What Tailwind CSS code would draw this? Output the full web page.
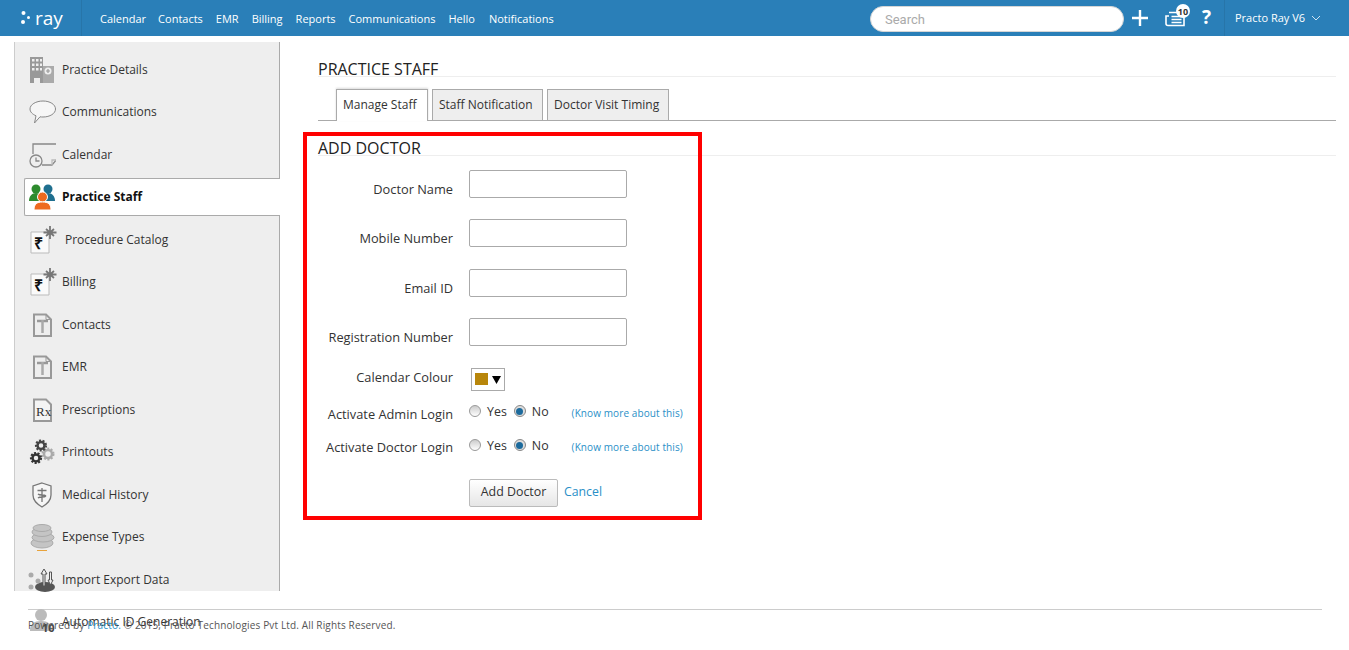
<!DOCTYPE html>
<html><head><meta charset="utf-8"><title>Practo Ray</title>
<script src="https://cdn.jsdelivr.net/npm/@tailwindcss/browser@4"></script></head>
<body class="relative h-[650px] overflow-hidden bg-white font-['Open_Sans',sans-serif] text-[12px] text-[#333]">
<header class="flex h-9 items-center bg-[#2a7fb8] text-white">
  <div class="flex h-9 w-[82px] shrink-0 items-center gap-[3px] border-r border-[#2775a9] pl-[20px]">
    <svg class="h-4 w-[12px]" viewBox="0 0 12 16" fill="#fff"><circle cx="3.500" cy="3" r="2"/><circle cx="8.500" cy="7.500" r="1.500"/><circle cx="3" cy="12" r="2"/></svg>
    <span class="text-[19px] leading-none">ray</span>
  </div>
  <nav class="ml-[18px] flex gap-[13px] pt-[2px] text-[11px]"><span>Calendar</span><span class="-ml-px">Contacts</span><span>EMR</span><span>Billing</span><span>Reports</span><span>Communications</span><span>Hello</span><span class="ml-px">Notifications</span></nav>
  <div class="ml-auto flex h-9 items-center">
    <div class="mt-[2px] flex h-[26px] w-[254px] items-center rounded-full border border-[#d5d5d5] bg-white pt-[1px] pl-[14px] font-['Roboto',sans-serif] text-[13px] text-[#aaa]">Search</div>
    <svg class="ml-[8px] h-4 w-4" viewBox="0 0 16 16" stroke="#fff" stroke-width="2.400" fill="none"><path d="M8 0v16M0 8h16"/></svg>
    <div class="relative ml-[17px] h-5 w-[22px]">
      <svg class="absolute top-[3px] left-0 h-[16px] w-[20px]" viewBox="0 0 20 16" fill="none" stroke="#fff" stroke-width="1.600"><path d="M4 1.500h15v13H3a2 2 0 0 1-2-2V5h3"/><path d="M6.500 5.500h10M6.500 8.500h10M6.500 11.500h10"/></svg>
      <span class="absolute -top-[4px] left-[11px] flex h-[14px] w-[14px] items-center justify-center rounded-full bg-white text-[9px] leading-none font-bold text-[#333]">10</span>
    </div>
    <span class="ml-[15px] -mt-[2px] w-[14px] text-[19px] leading-none font-bold">?</span>
    <div class="ml-[8px] flex h-9 w-[125px] items-center border-l border-[#2775a9] pl-[10px] text-[11px]">Practo Ray V6
      <svg class="ml-[6px] h-[6px] w-[10px]" viewBox="0 0 10 6" fill="none" stroke="#cfe3f1" stroke-width="1"><path d="M1 1l4 4 4-4"/></svg>
    </div>
  </div>
</header>

<div class="flex h-[573px]">
  <aside class="mt-[6px] ml-[14px] h-[549px] w-[266px] shrink-0 border-r border-l border-[#aaa] border-l-[#ccc] bg-[#eee] pt-[6.3px]">
    <div class="flex h-[42.5px] items-center pl-[13px]"><svg class="mr-[6px] h-[28px] w-[28px]" viewBox="0 0 28 28"><path fill="#999" d="M2 1h13v26H2z"/><path fill="#aaa" d="M15 10h11v17H15z"/><path fill="#eee" d="M4 3h2.500v2.500H4zM8 3h2.500v2.500H8zM12 3h2v2.500h-2zM4 7.500h2.500v2.500H4zM8 7.500h2.500v2.500H8zM12 7.500h2v2.500h-2zM4 12h2.500v2.500H4zM8 12h2.500v2.500H8zM12 12h2v2.500h-2zM6 22h6v5H6z"/><circle cx="20" cy="15" r="3.500" fill="#eee"/><path stroke="#999" stroke-width="1.200" d="M18 15h4M20 13v4"/></svg>Practice Details</div>
    <div class="flex h-[42.5px] items-center pl-[13px]"><svg class="mr-[6px] h-[28px] w-[28px]" viewBox="0 0 28 28" fill="#f6f6f6" stroke="#888"><path d="M15 3c7 0 12.500 3.500 12.500 8S22 19 15 19c-1 0-2 0-3-.2L6.500 25l1.500-7.200C4.500 16.200 2 14 2 11c0-4.500 6-8 13-8z"/></svg>Communications</div>
    <div class="flex h-[42.5px] items-center pl-[13px]"><svg class="mr-[6px] h-[28px] w-[28px]" viewBox="0 0 28 28" fill="none" stroke="#888" stroke-width="1.300"><path d="M5 13V3h24v15l-5 6H14"/><path d="M24 24v-5h5" stroke="#bbb"/><circle cx="8" cy="20" r="6" fill="#eee"/><path d="M8 16.500V20h3.500"/></svg>Calendar</div>
    <div class="h-[42.5px] pt-[2px] pl-[9px]"><div class="-mr-px flex h-[38px] items-center rounded-l-[2px] border border-r-0 border-[#aaa] bg-white pl-[3px] font-bold text-[#111]"><svg class="mr-[6px] h-[28px] w-[28px]" viewBox="0 0 28 28"><circle cx="8" cy="6" r="4.500" fill="#2e8b2e"/><path fill="#2e8b2e" d="M1 18c0-5 3-8 7-8s7 3 7 8z"/><circle cx="20" cy="6" r="4.500" fill="#1f6f8f"/><path fill="#1f6f8f" d="M13 18c0-5 3-8 7-8s7 3 7 8z"/><circle cx="14.500" cy="14" r="5" fill="#ee6a1f" stroke="#fff"/><path fill="#ee6a1f" stroke="#fff" d="M6 27c0-6 3-8 8.500-8s8.500 2 8.500 8z"/></svg>Practice Staff</div></div>
    <div class="flex h-[42.5px] items-center pl-[15px]"><svg class="mr-[6px] h-[28px] w-[29px]" viewBox="0 0 29 28"><path fill="#fafafa" stroke="#bbb" d="M1 6h18v21H1z"/><path stroke="#777" stroke-width="1.800" d="M20 0v13M13.500 6.500h13M16 3l8 7M24 3l-8 7"/><text x="3.500" y="23" font-size="16" font-weight="700" fill="#111">₹</text></svg>Procedure Catalog</div>
    <div class="flex h-[42.5px] items-center pl-[15px]"><svg class="mr-[3px] h-[28px] w-[29px]" viewBox="0 0 29 28"><path fill="#fafafa" stroke="#bbb" d="M1 6h18v21H1z"/><path stroke="#777" stroke-width="1.800" d="M20 0v13M13.500 6.500h13M16 3l8 7M24 3l-8 7"/><text x="3.500" y="23" font-size="16" font-weight="700" fill="#111">₹</text></svg>Billing</div>
    <div class="flex h-[42.5px] items-center pl-[13px]"><svg class="mr-[6px] h-[28px] w-[28px]" viewBox="0 0 28 28" fill="none" stroke="#999" stroke-width="2"><path d="M6 3.500h12l5 5v16.500H6z"/><path stroke-width="1" d="M18 3.500v5h5"/><path stroke-width="2.500" d="M9 10h11"/><path stroke-width="2.500" d="M14.500 9v13" stroke="#aaa"/></svg>Contacts</div>
    <div class="flex h-[42.5px] items-center pl-[13px]"><svg class="mr-[6px] h-[28px] w-[28px]" viewBox="0 0 28 28" fill="none" stroke="#999" stroke-width="2"><path d="M6 3.500h12l5 5v16.500H6z"/><path stroke-width="1" d="M18 3.500v5h5"/><path stroke-width="2.500" d="M9 10h11"/><path stroke-width="2.500" d="M14.500 9v13" stroke="#aaa"/></svg>EMR</div>
    <div class="flex h-[42.5px] items-center pl-[13px]"><svg class="mr-[6px] h-[28px] w-[28px]" viewBox="0 0 28 28" fill="#f4f4f4" stroke="#999" stroke-width="2"><path d="M6 3.500h12l5 5v16.500H6z"/><text x="8" y="20" font-family="Liberation Serif" font-size="13" fill="#333" stroke="none">Rx</text></svg>Prescriptions</div>
    <div class="flex h-[42.5px] items-center pl-[13px]"><svg class="mr-[6px] h-[28px] w-[28px]" viewBox="0 0 28 28" fill="none"><circle cx="20" cy="16" r="4" stroke="#aaa" stroke-width="2.500"/><circle cx="20" cy="16" r="5.500" stroke="#aaa" stroke-width="2" stroke-dasharray="2 1.500"/><circle cx="13" cy="7.500" r="3.500" stroke="#444" stroke-width="2.500"/><circle cx="13" cy="7.500" r="5" stroke="#444" stroke-width="2.200" stroke-dasharray="2 1.500"/><circle cx="8" cy="20" r="3.500" stroke="#333" stroke-width="2.500"/><circle cx="8" cy="20" r="5" stroke="#333" stroke-width="2.200" stroke-dasharray="2 1.500"/></svg>Printouts</div>
    <div class="flex h-[42.5px] items-center pl-[13px]"><svg class="mr-[6px] h-[28px] w-[28px]" viewBox="0 0 28 28" fill="#f6f6f6" stroke="#777" stroke-width="1.300"><path d="M14 2l9 3v9c0 6-4 9-9 12-5-3-9-6-9-12V5z"/><path fill="none" d="M14 7v14M9.500 9.500h9M10 13c2 2 6 0 8 2M10 17c2-2 6 0 8-2"/></svg>Medical History</div>
    <div class="flex h-[42.5px] items-center pl-[13px]"><svg class="mr-[6px] h-[28px] w-[28px]" viewBox="0 0 28 28" fill="#c4c4c4" stroke="#aaa"><ellipse cx="14" cy="20" rx="11" ry="5"/><ellipse cx="15" cy="14.500" rx="11" ry="4.500"/><ellipse cx="14" cy="9" rx="10" ry="4.500"/><ellipse cx="14" cy="5" rx="9" ry="3.500"/><path stroke="#e8a33c" stroke-width="1" d="M9 27.500h10"/></svg>Expense Types</div>
    <div class="flex h-[42.5px] items-center pl-[13px]"><svg class="mr-[6px] h-[28px] w-[28px]" viewBox="0 0 28 28"><ellipse cx="17" cy="21" rx="10" ry="5" fill="#555"/><circle cx="3" cy="9" r="2.500" fill="#aaa"/><circle cx="3" cy="21" r="2.500" fill="#aaa"/><circle cx="10" cy="15" r="2.500" fill="#aaa"/><path fill="#eee" stroke="#555" d="M13 8l3-5 3 5h-2v12h-2V8zM20 14h1.500V6h2v8H25l-2.500 5z"/></svg>Import Export Data</div>
    <div class="flex h-[42.5px] items-center pl-[13px]"><svg class="mr-[6px] h-[28px] w-[28px]" viewBox="0 0 28 28"><circle cx="13" cy="7" r="6" fill="#bbb"/><path fill="#bbb" d="M2 23c0-7 4-10 11-10s11 3 11 10z"/><text x="14" y="24" font-size="11" font-weight="700" fill="#444">10</text></svg>Automatic ID Generation</div>
  </aside>

  <main class="ml-[38px] flex-1 pr-[13px]">
    <h1 class="mt-[24px] h-[17px] border-b border-[#eee] text-[16px] leading-[19px] text-[#222] uppercase">Practice Staff</h1>
    <div class="mt-[12px] flex h-[32px] gap-[4px] border-b border-[#aaa] pl-[18px]">
      <div class="flex h-[32px] w-[92px] items-center border border-b-0 border-[#aaa] bg-white pb-[1px] pl-[6px] shadow-[0_-1px_2px_rgba(0,0,0,0.15)]">Manage Staff</div>
      <div class="flex h-[32px] w-[111px] items-center border border-[#aaa] bg-[#eee] pl-[6px]">Staff Notification</div>
      <div class="flex h-[32px] w-[122px] items-center border border-[#aaa] bg-[#eee] pl-[6px]">Doctor Visit Timing</div>
    </div>
    <h2 class="mt-[18px] h-[17px] border-b border-[#eee] text-[16px] leading-[19px] text-[#222] uppercase">Add Doctor</h2>
    <form class="mt-[14px] w-[380px] text-[12.8px]">
      <div class="flex h-[49.4px] gap-[16px]"><label class="w-[135px] pt-[10px] text-right">Doctor Name</label><input class="h-[28px] w-[158px] rounded-[2px] border border-[#aaa] bg-white"></div>
      <div class="flex h-[49.4px] gap-[16px]"><label class="w-[135px] pt-[10px] text-right">Mobile Number</label><input class="h-[28px] w-[158px] rounded-[2px] border border-[#aaa] bg-white"></div>
      <div class="flex h-[49.4px] gap-[16px]"><label class="w-[135px] pt-[10px] text-right">Email ID</label><input class="h-[28px] w-[158px] rounded-[2px] border border-[#aaa] bg-white"></div>
      <div class="flex h-[49.4px] gap-[16px]"><label class="w-[135px] pt-[10px] text-right">Registration Number</label><input class="h-[28px] w-[158px] rounded-[2px] border border-[#aaa] bg-white"></div>
      <div class="flex h-[37px] gap-[18px]"><label class="w-[135px] text-right">Calendar Colour</label>
        <div class="flex h-[23px] w-[34px] items-center gap-[4px] border border-[#aaa] pl-[3px]"><span class="h-[12px] w-[13px] bg-[#b8860b]"></span><svg class="h-[9px] w-[9px]" viewBox="0 0 9 9" fill="#000"><path d="M0 1h9L4.500 9z"/></svg></div>
      </div>
      <div class="flex h-[33px] items-start gap-[16px]"><label class="w-[135px] text-right">Activate Admin Login</label>
        <div class="-mt-[2px] flex items-center text-[12.4px]">
          <span class="-mt-px h-[12px] w-[12px] rounded-full border border-[#999] bg-linear-to-b from-[#ccc] to-[#fff]"></span><span class="ml-[6px]">Yes</span>
          <span class="-mt-px ml-[7px] flex h-[12px] w-[12px] items-center justify-center rounded-full border border-[#888] bg-[#ddd]"><span class="h-[7px] w-[7px] rounded-full bg-[#1c6a9c]"></span></span><span class="ml-[6px]">No</span>
          <span class="ml-[23px] pt-[3px] text-[10px] tracking-[0.1px] text-[#2a8fc7]">(Know more about this)</span>
        </div>
      </div>
      <div class="flex h-[41px] items-start gap-[16px]"><label class="w-[135px] text-right">Activate Doctor Login</label>
        <div class="-mt-[1px] flex items-center text-[12.4px]">
          <span class="-mt-px h-[12px] w-[12px] rounded-full border border-[#999] bg-linear-to-b from-[#ccc] to-[#fff]"></span><span class="ml-[6px]">Yes</span>
          <span class="-mt-px ml-[7px] flex h-[12px] w-[12px] items-center justify-center rounded-full border border-[#888] bg-[#ddd]"><span class="h-[7px] w-[7px] rounded-full bg-[#1c6a9c]"></span></span><span class="ml-[6px]">No</span>
          <span class="ml-[23px] pt-[3px] text-[10px] tracking-[0.1px] text-[#2a8fc7]">(Know more about this)</span>
        </div>
      </div>
      <div class="flex items-center pl-[151px]">
        <button type="button" class="h-[28px] w-[89px] rounded-[2px] border border-[#bbb] bg-linear-to-b from-white to-[#e6e6e6] text-[12.4px] text-[#333]">Add Doctor</button>
        <a class="ml-[6px] text-[12.3px] text-[#2a8fc7]">Cancel</a>
      </div>
    </form>
  </main>
</div>

<footer class="mx-[28px] w-[1294px] border-t border-[#ccc] pt-[8px] text-[10px] leading-[14px] tracking-[0.15px] text-[#555]">Powered by <a class="text-[#2a8fc7]">Practo.</a> © 2015, Practo Technologies Pvt Ltd. All Rights Reserved.</footer>

<div class="pointer-events-none absolute top-[132px] left-[303px] h-[388px] w-[399px] border-4 border-[#f00]"></div>
</body></html>
